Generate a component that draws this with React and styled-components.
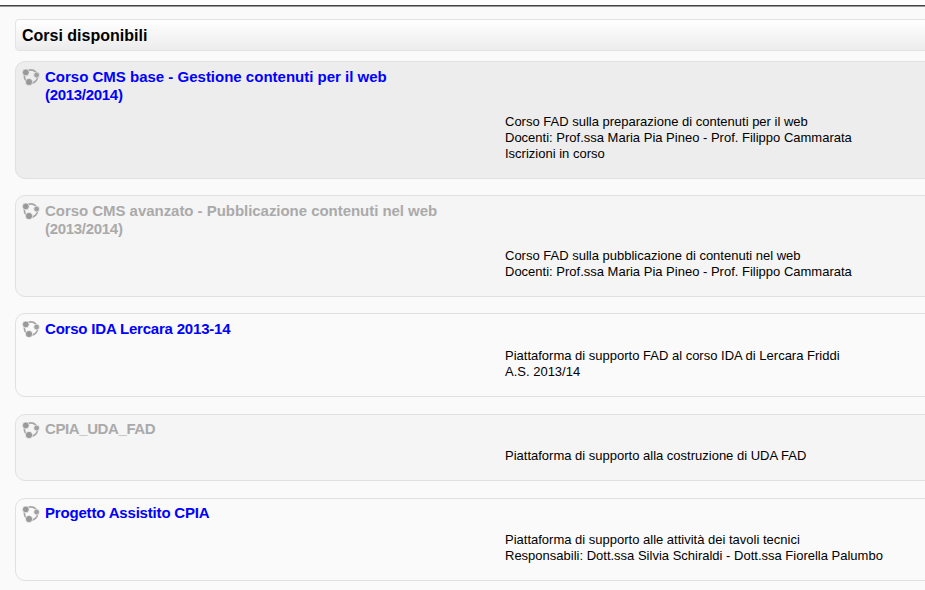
import styled, { createGlobalStyle } from 'styled-components'

const GlobalStyle = createGlobalStyle`
    html, body {
        margin: 0;
        padding: 0;
        height: 590px;
        overflow: hidden;
        background: #fafafa;
        font-family: "Liberation Sans", Arial, sans-serif;
    }
`

const Page = styled.div`
    width: 925px;
    height: 590px;
    overflow: hidden;
`
const TopBar = styled.div`
    height: 5px;
    background: #fff;
    border-bottom: solid 1px #444;
    box-shadow: 0 1px 0 #999;
`
const Content = styled.div`
    width: 960px;
    padding: 13px 0 0 15px;
`
const Heading = styled.h2`
    margin: 0 0 10px;
    height: 30px;
    padding-left: 6px;
    border: solid 1px #e3e3e3;
    border-radius: 4px;
    background: linear-gradient(#ffffff, #ececec);
    color: #000;
    font-size: 16px;
    font-weight: bold;
    line-height: 31px;
`
const Card = styled.div`
    display: flex;
    height: ${props => props.$height}px;
    margin-bottom: ${props => props.$gap}px;
    padding: 6px 0 0 6px;
    box-sizing: border-box;
    border: solid 1px #e0e0e0;
    border-radius: 10px;
    background: ${props => props.$bg};
`
const Info = styled.div`
    display: flex;
    align-items: flex-start;
    width: 483px;
    flex: none;
`
const Icon = styled.svg`
    width: 18px;
    height: 18px;
    flex: none;
`
const Title = styled.a`
    display: block;
    width: 410px;
    margin: ${props => props.$lift ? -1 : 0}px 0 0 5px;
    color: ${props => props.$dimmed ? '#aaaaaa' : '#0000ff'};
    font-size: 15px;
    font-weight: bold;
    line-height: 18px;
    letter-spacing: ${props => props.$tracking || 0}px;
    cursor: pointer;
`
const Year = styled.span`
    display: block;
    letter-spacing: -0.3px;
`
const Summary = styled.div`
    padding-top: ${props => props.$top}px;
    color: #000;
    font-size: 13px;
    line-height: 16px;
`

// ring with three blobs, each cut out of the ring with the card colour
const CourseIcon = ({ bg }) => (
    <Icon viewBox="0 0 18 18">
        <circle cx="9" cy="8.5" r="6.6" fill="none" stroke="#a6a6a6" strokeWidth="1.7" />
        <circle cx="3.8" cy="4.4" r="3.4" fill="#999" stroke={bg} strokeWidth="0.7" />
        <circle cx="14.6" cy="7" r="2.9" fill="#a0a0a0" stroke={bg} strokeWidth="0.7" />
        <circle cx="7" cy="14" r="3.6" fill="#999" stroke={bg} strokeWidth="0.7" />
    </Icon>
)

const courses = [
    {
        title: 'Corso CMS base - Gestione contenuti per il web',
        year: '(2013/2014)',
        lines: ['Corso FAD sulla preparazione di contenuti per il web', 'Docenti: Prof.ssa Maria Pia Pineo - Prof. Filippo Cammarata', 'Iscrizioni in corso'],
        height: 118, gap: 16, bg: '#ededed', top: 46,
    },
    {
        title: 'Corso CMS avanzato - Pubblicazione contenuti nel web',
        year: '(2013/2014)',
        lines: ['Corso FAD sulla pubblicazione di contenuti nel web', 'Docenti: Prof.ssa Maria Pia Pineo - Prof. Filippo Cammarata'],
        height: 102, gap: 16, bg: '#f5f5f5', top: 46, dimmed: true, tracking: -0.04,
    },
    {
        title: 'Corso IDA Lercara 2013-14',
        lines: ['Piattaforma di supporto FAD al corso IDA di Lercara Friddi', 'A.S. 2013/14'],
        height: 84, gap: 17, bg: '#fafafa', top: 28, tracking: -0.2,
    },
    {
        title: 'CPIA_UDA_FAD',
        lines: ['Piattaforma di supporto alla costruzione di UDA FAD'],
        height: 67, gap: 17, bg: '#f5f5f5', top: 27, dimmed: true, tracking: -0.4, lift: true,
    },
    {
        title: 'Progetto Assistito CPIA',
        lines: ['Piattaforma di supporto alle attività dei tavoli tecnici', 'Responsabili: Dott.ssa Silvia Schiraldi - Dott.ssa Fiorella Palumbo'],
        height: 83, gap: 0, bg: '#fafafa', top: 27, tracking: -0.18, lift: true,
    },
]

export default function App() {
    return (
        <Page>
            <GlobalStyle />
            <TopBar />
            <Content>
                <Heading>Corsi disponibili</Heading>
                {courses.map(course => (
                    <Card key={course.title} $height={course.height} $gap={course.gap} $bg={course.bg}>
                        <Info>
                            <CourseIcon bg={course.bg} />
                            <Title $dimmed={course.dimmed} $tracking={course.tracking} $lift={course.lift}>
                                {course.title}
                                {course.year && <Year>{course.year}</Year>}
                            </Title>
                        </Info>
                        <Summary $top={course.top}>
                            {course.lines.map(line => <div key={line}>{line}</div>)}
                        </Summary>
                    </Card>
                ))}
            </Content>
        </Page>
    )
}
